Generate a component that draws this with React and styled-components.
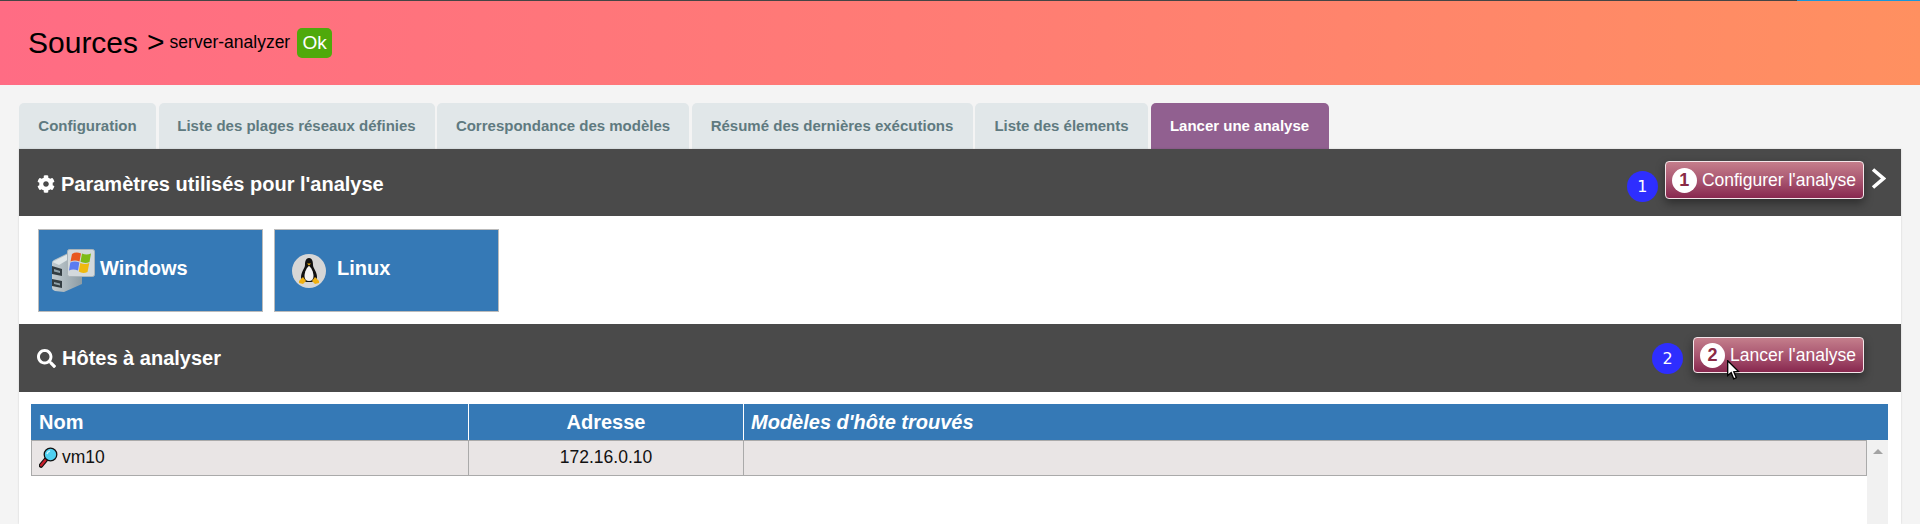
import React from 'react'
import styled, { createGlobalStyle } from 'styled-components'
import { FaCog, FaSearch } from 'react-icons/fa'

const GlobalStyle = createGlobalStyle`
  html, body {
    margin: 0;
    height: 524px;
    overflow: hidden;
    background: #f4f4f4;
    font-family: 'Liberation Sans', Arial, sans-serif;
  }
`

const TABS = [
  { label: 'Configuration', width: 137 },
  { label: 'Liste des plages réseaux définies', width: 276 },
  { label: 'Correspondance des modèles', width: 252 },
  { label: 'Résumé des dernières exécutions', width: 281 },
  { label: 'Liste des élements', width: 173 },
  { label: 'Lancer une analyse', width: 178, active: true },
]

const WindowsIcon = () => (
  <svg width="44" height="44" viewBox="0 0 44 44">
    <defs>
      <linearGradient id="serverBody" x1="0" y1="0" x2="1" y2="0">
        <stop offset="0" stopColor="#c3ccd0" />
        <stop offset="1" stopColor="#8d9ca4" />
      </linearGradient>
    </defs>
    <path d="M1 14 Q1 12 3 11 L17 4 L31 8 L31 35 L13 43 L4 42 Q1 41 1 39 Z" fill="url(#serverBody)" />
    <path d="M1.500 13 L17 5 L23 7 L8 16 Z" fill="#dfe6e8" />
    <path d="M1 17 L11 20 L11 27 L1 25 Z" fill="#333d42" />
    <path d="M3 20 L9 22 L9 24 L3 22.500 Z" fill="#8fa0a8" />
    <path d="M1 30 L11 32 L11 39 L1 37 Z" fill="#333d42" />
    <path d="M3 33 L9 34.500 L9 36.500 L3 35 Z" fill="#8fa0a8" />
    <rect x="16.500" y="0.500" width="27" height="27" rx="2" fill="#d3d9dc" stroke="#aab4b9" />
    <path d="M21 5 Q25 2.500 30 4.500 L28.500 12.500 Q24 10.500 19.500 12.500 Z" fill="#e8571f" />
    <path d="M31 4.500 Q35.500 6.500 40 4.500 L38.500 13 Q34 15 29.500 12.800 Z" fill="#7ebb17" />
    <path d="M19.300 13.500 Q24 11.500 28.300 13.500 L27 21.500 Q22 19.500 18 21.500 Z" fill="#5a7cf0" />
    <path d="M29.300 14 Q34 16 38.300 14 L36.500 23 Q31.500 25 27.800 22.500 Z" fill="#f0b90f" />
  </svg>
)

const TuxIcon = () => (
  <svg width="34" height="34" viewBox="0 0 34 34">
    <circle cx="17" cy="17" r="17" fill="#d6d6d6" />
    <path d="M17 4 C13.500 4 13 8 13 11 C13 14 9 18 9 23 C9 26 11 28 17 28 C23 28 25 26 25 23 C25 18 21 14 21 11 C21 8 20.500 4 17 4 Z" fill="#111" />
    <path d="M17 12 C15 13 12.500 18 12.500 22 C12.500 25 14 27 17 27 C20 27 21.500 25 21.500 22 C21.500 18 19 13 17 12 Z" fill="#f4f4f4" />
    <path d="M15 9.500 L19 9.500 L17 11.500 Z" fill="#f0b010" />
    <path d="M7 27 L11 23 L14 27 L11 30 L7 29 Z" fill="#f0b010" />
    <path d="M27 27 L23 23 L20 27 L23 30 L27 29 Z" fill="#f0b010" />
  </svg>
)

const LensIcon = () => (
  <svg width="19" height="21" viewBox="0 0 19 21">
    <path d="M2 18.500 L7 12.500" stroke="#111" strokeWidth="4.500" strokeLinecap="round" />
    <path d="M2.200 18.300 L6.500 13" stroke="#c8202c" strokeWidth="2.500" strokeLinecap="round" />
    <circle cx="11.500" cy="7.500" r="6.300" fill="#4fd0f0" stroke="#111" strokeWidth="1.300" />
    <path d="M8 7 Q8.500 4.500 11 4" stroke="#c9f3fc" strokeWidth="1.500" fill="none" />
  </svg>
)

const Chevron = () => (
  <ChevronMark width="15" height="21" viewBox="0 0 15 21">
    <path d="M2 1.500 L12.500 10.500 L2 19.500" fill="none" stroke="#fff" strokeWidth="3.600" />
  </ChevronMark>
)

const Cursor = () => (
  <CursorMark width="13" height="20" viewBox="0 0 13 20">
    <path d="M0.700 0.700 L0.700 15.500 L4.200 12.500 L6.700 18.800 L9.300 17.700 L6.800 11.800 L11.500 11.500 Z" fill="#fff" stroke="#000" strokeWidth="1.300" />
  </CursorMark>
)

const App = () => {
  return (
    <Page>
      <GlobalStyle />
      <TopLine><TopProgress /></TopLine>
      <Header>
        <Title>Sources</Title>
        <Arrow>&gt;</Arrow>
        <Subtitle>server-analyzer</Subtitle>
        <Status>Ok</Status>
      </Header>

      <Tabs>
        {TABS.map(tab => <Tab key={tab.label} $active={tab.active} $width={tab.width}>{tab.label}</Tab>)}
      </Tabs>

      <Panel>
        <Heading $height={67} $padRight={15}>
          <HeadingTitle $top={3}><FaCog size={18} />Paramètres utilisés pour l'analyse</HeadingTitle>
          <HeadingActions>
            <StepDot $top={22} $gap={7}>1</StepDot>
            <ActionButton $height={38} $top={12}>
              <ButtonNumber>1</ButtonNumber>Configurer l'analyse
            </ActionButton>
            <Chevron />
          </HeadingActions>
        </Heading>

        <Tiles>
          <Tile $pad={12} $gap={5}><WindowsIcon /><TileLabel>Windows</TileLabel></Tile>
          <Tile $pad={17} $gap={11}><TuxIcon /><TileLabel>Linux</TileLabel></Tile>
        </Tiles>

        <Heading $height={68} $padRight={37}>
          <HeadingTitle $top={1}><FaSearch size={19} />Hôtes à analyser</HeadingTitle>
          <HeadingActions>
            <StepDot $top={19} $gap={10}>2</StepDot>
            <ActionButton $height={36} $top={13}>
              <ButtonNumber>2</ButtonNumber>Lancer l'analyse
              <Cursor />
            </ActionButton>
          </HeadingActions>
        </Heading>

        <TableWrap>
          <TableHead>
            <HeadCell>Nom</HeadCell>
            <HeadCell $center>Adresse</HeadCell>
            <HeadCell $italic>Modèles d'hôte trouvés</HeadCell>
          </TableHead>
          <TableBody>
            <Rows>
              <Row>
                <Cell><LensIcon />vm10</Cell>
                <Cell $center>172.16.0.10</Cell>
                <Cell />
              </Row>
            </Rows>
            <Scrollbar><ScrollArrow /></Scrollbar>
          </TableBody>
        </TableWrap>
      </Panel>
    </Page>
  )
}

const Page = styled.div`
  height: 524px;
  overflow: hidden;
  display: flex;
  flex-direction: column;
`

const TopLine = styled.div`
  height: 1px;
  flex: none;
  background: #454545;
  display: flex;
  justify-content: flex-end;
`

const TopProgress = styled.div`
  width: 123px;
  background: #1a96d8;
`

const Header = styled.header`
  height: 84px;
  flex: none;
  padding-left: 28px;
  display: flex;
  align-items: center;
  color: #000;
  background: linear-gradient(92deg, #ff6c84 0%, #ff7c74 50%, #ff9060 100%);
`

const Title = styled.span`
  font-size: 30px;
`

const Arrow = styled.span`
  font-size: 30px;
  margin: -2px 0 0 9px;
`

const Subtitle = styled.span`
  font-size: 17.500px;
  margin: -2px 0 0 5px;
`

const Status = styled.span`
  width: 35px;
  height: 30px;
  margin: 0 0 0 7px;
  border-radius: 5px;
  background: #4fa90b;
  color: #fff;
  font-size: 19px;
  display: flex;
  align-items: center;
  justify-content: center;
`

const Tabs = styled.nav`
  display: flex;
  gap: 2.500px;
  margin: 18px 0 0 19px;
  flex: none;
`

const Tab = styled.div`
  width: ${props => props.$width}px;
  height: 46px;
  box-sizing: border-box;
  padding-bottom: 2px;
  border-radius: 5px 5px 0 0;
  background: ${props => (props.$active ? '#916090' : '#e1e7e9')};
  color: ${props => (props.$active ? '#fff' : '#5f7a80')};
  font-size: 15px;
  font-weight: 700;
  display: flex;
  align-items: center;
  justify-content: center;
`

const Panel = styled.main`
  margin: 0 19px;
  flex: 1;
  min-height: 0;
  background: #fff;
  display: flex;
  flex-direction: column;
  box-shadow: 0 0 2px rgba(0, 0, 0, 0.15);
`

const Heading = styled.section`
  height: ${props => props.$height}px;
  flex: none;
  background: #4a4a4a;
  display: flex;
  justify-content: space-between;
  padding: 0 ${props => props.$padRight}px 0 18px;
`

const HeadingTitle = styled.h2`
  margin: 0;
  padding-top: ${props => props.$top}px;
  display: flex;
  align-items: center;
  gap: 6px;
  color: #fff;
  font-size: 20px;
  font-weight: 700;
`

const HeadingActions = styled.div`
  display: flex;
  align-items: flex-start;
`

const StepDot = styled.div`
  width: 31px;
  height: 31px;
  margin: ${props => props.$top}px ${props => props.$gap}px 0 0;
  border-radius: 50%;
  background: #2e2eff;
  color: #fff;
  font-size: 16px;
  font-family: 'DejaVu Sans', sans-serif;
  display: flex;
  align-items: center;
  justify-content: center;
`

const ActionButton = styled.button`
  position: relative;
  height: ${props => props.$height}px;
  margin-top: ${props => props.$top}px;
  box-sizing: border-box;
  padding: 0 7px 0 6px;
  border: 1px solid #f4e6ea;
  border-radius: 4px;
  background: linear-gradient(180deg, #c47e8b 0%, #a95671 50%, #88284f 100%);
  box-shadow: 0 4px 10px rgba(0, 0, 0, 0.4);
  color: #fff;
  font-family: inherit;
  font-size: 17.500px;
  display: flex;
  align-items: center;
  gap: 5px;
`

const ButtonNumber = styled.span`
  width: 25px;
  height: 25px;
  border-radius: 50%;
  background: #fff;
  color: #8a2a45;
  font-size: 18px;
  font-weight: 700;
  display: flex;
  align-items: center;
  justify-content: center;
`

const ChevronMark = styled.svg`
  margin: 19px 0 0 7px;
`

const CursorMark = styled.svg`
  position: absolute;
  left: 33px;
  top: 22px;
`

const Tiles = styled.div`
  height: 108px;
  flex: none;
  box-sizing: border-box;
  padding: 13px 0 0 19px;
  display: flex;
  gap: 11px;
`

const Tile = styled.div`
  width: 225px;
  height: 83px;
  box-sizing: border-box;
  border: 1px solid #bbb;
  background: #3579b6;
  color: #fff;
  font-size: 20px;
  font-weight: 700;
  display: flex;
  align-items: center;
  gap: ${props => props.$gap}px;
  padding-left: ${props => props.$pad}px;
`

const TileLabel = styled.span`
  margin-top: -4px;
`

const TableWrap = styled.div`
  flex: 1;
  min-height: 0;
  margin: 12px 13px 0 12px;
  display: flex;
  flex-direction: column;
`

const TableHead = styled.div`
  height: 36px;
  flex: none;
  background: #3579b6;
  display: grid;
  grid-template-columns: 437px 275px 1fr;
`

const HeadCell = styled.div`
  color: #fff;
  font-size: 20px;
  font-weight: 700;
  font-style: ${props => (props.$italic ? 'italic' : 'normal')};
  text-align: ${props => (props.$center ? 'center' : 'left')};
  line-height: 36px;
  padding-left: ${props => (props.$center ? 0 : 7)}px;
  border-left: 1px solid #fff;

  &:first-child {
    border-left: none;
    padding-left: 8px;
  }
`

const TableBody = styled.div`
  flex: 1;
  min-height: 0;
  display: flex;
`

const Rows = styled.div`
  flex: 1;
`

const Row = styled.div`
  height: 36px;
  box-sizing: border-box;
  background: #e9e5e5;
  border: 1px solid #aaa;
  display: grid;
  grid-template-columns: 436px 275px 1fr;
`

const Cell = styled.div`
  color: #111;
  font-size: 17.500px;
  display: flex;
  align-items: center;
  gap: 4px;
  justify-content: ${props => (props.$center ? 'center' : 'flex-start')};
  padding: 0 0 1px ${props => (props.$center ? 0 : 7)}px;
  border-left: 1px solid #aaa;

  &:first-child {
    border-left: none;
  }
`

const Scrollbar = styled.div`
  width: 21px;
  flex: none;
  background: #f1f1f1;
  display: flex;
  justify-content: center;
  padding-top: 9px;
  box-sizing: border-box;
`

const ScrollArrow = styled.div`
  width: 0;
  height: 0;
  border-left: 5px solid transparent;
  border-right: 5px solid transparent;
  border-bottom: 5px solid #a3a3a3;
`

export default App
